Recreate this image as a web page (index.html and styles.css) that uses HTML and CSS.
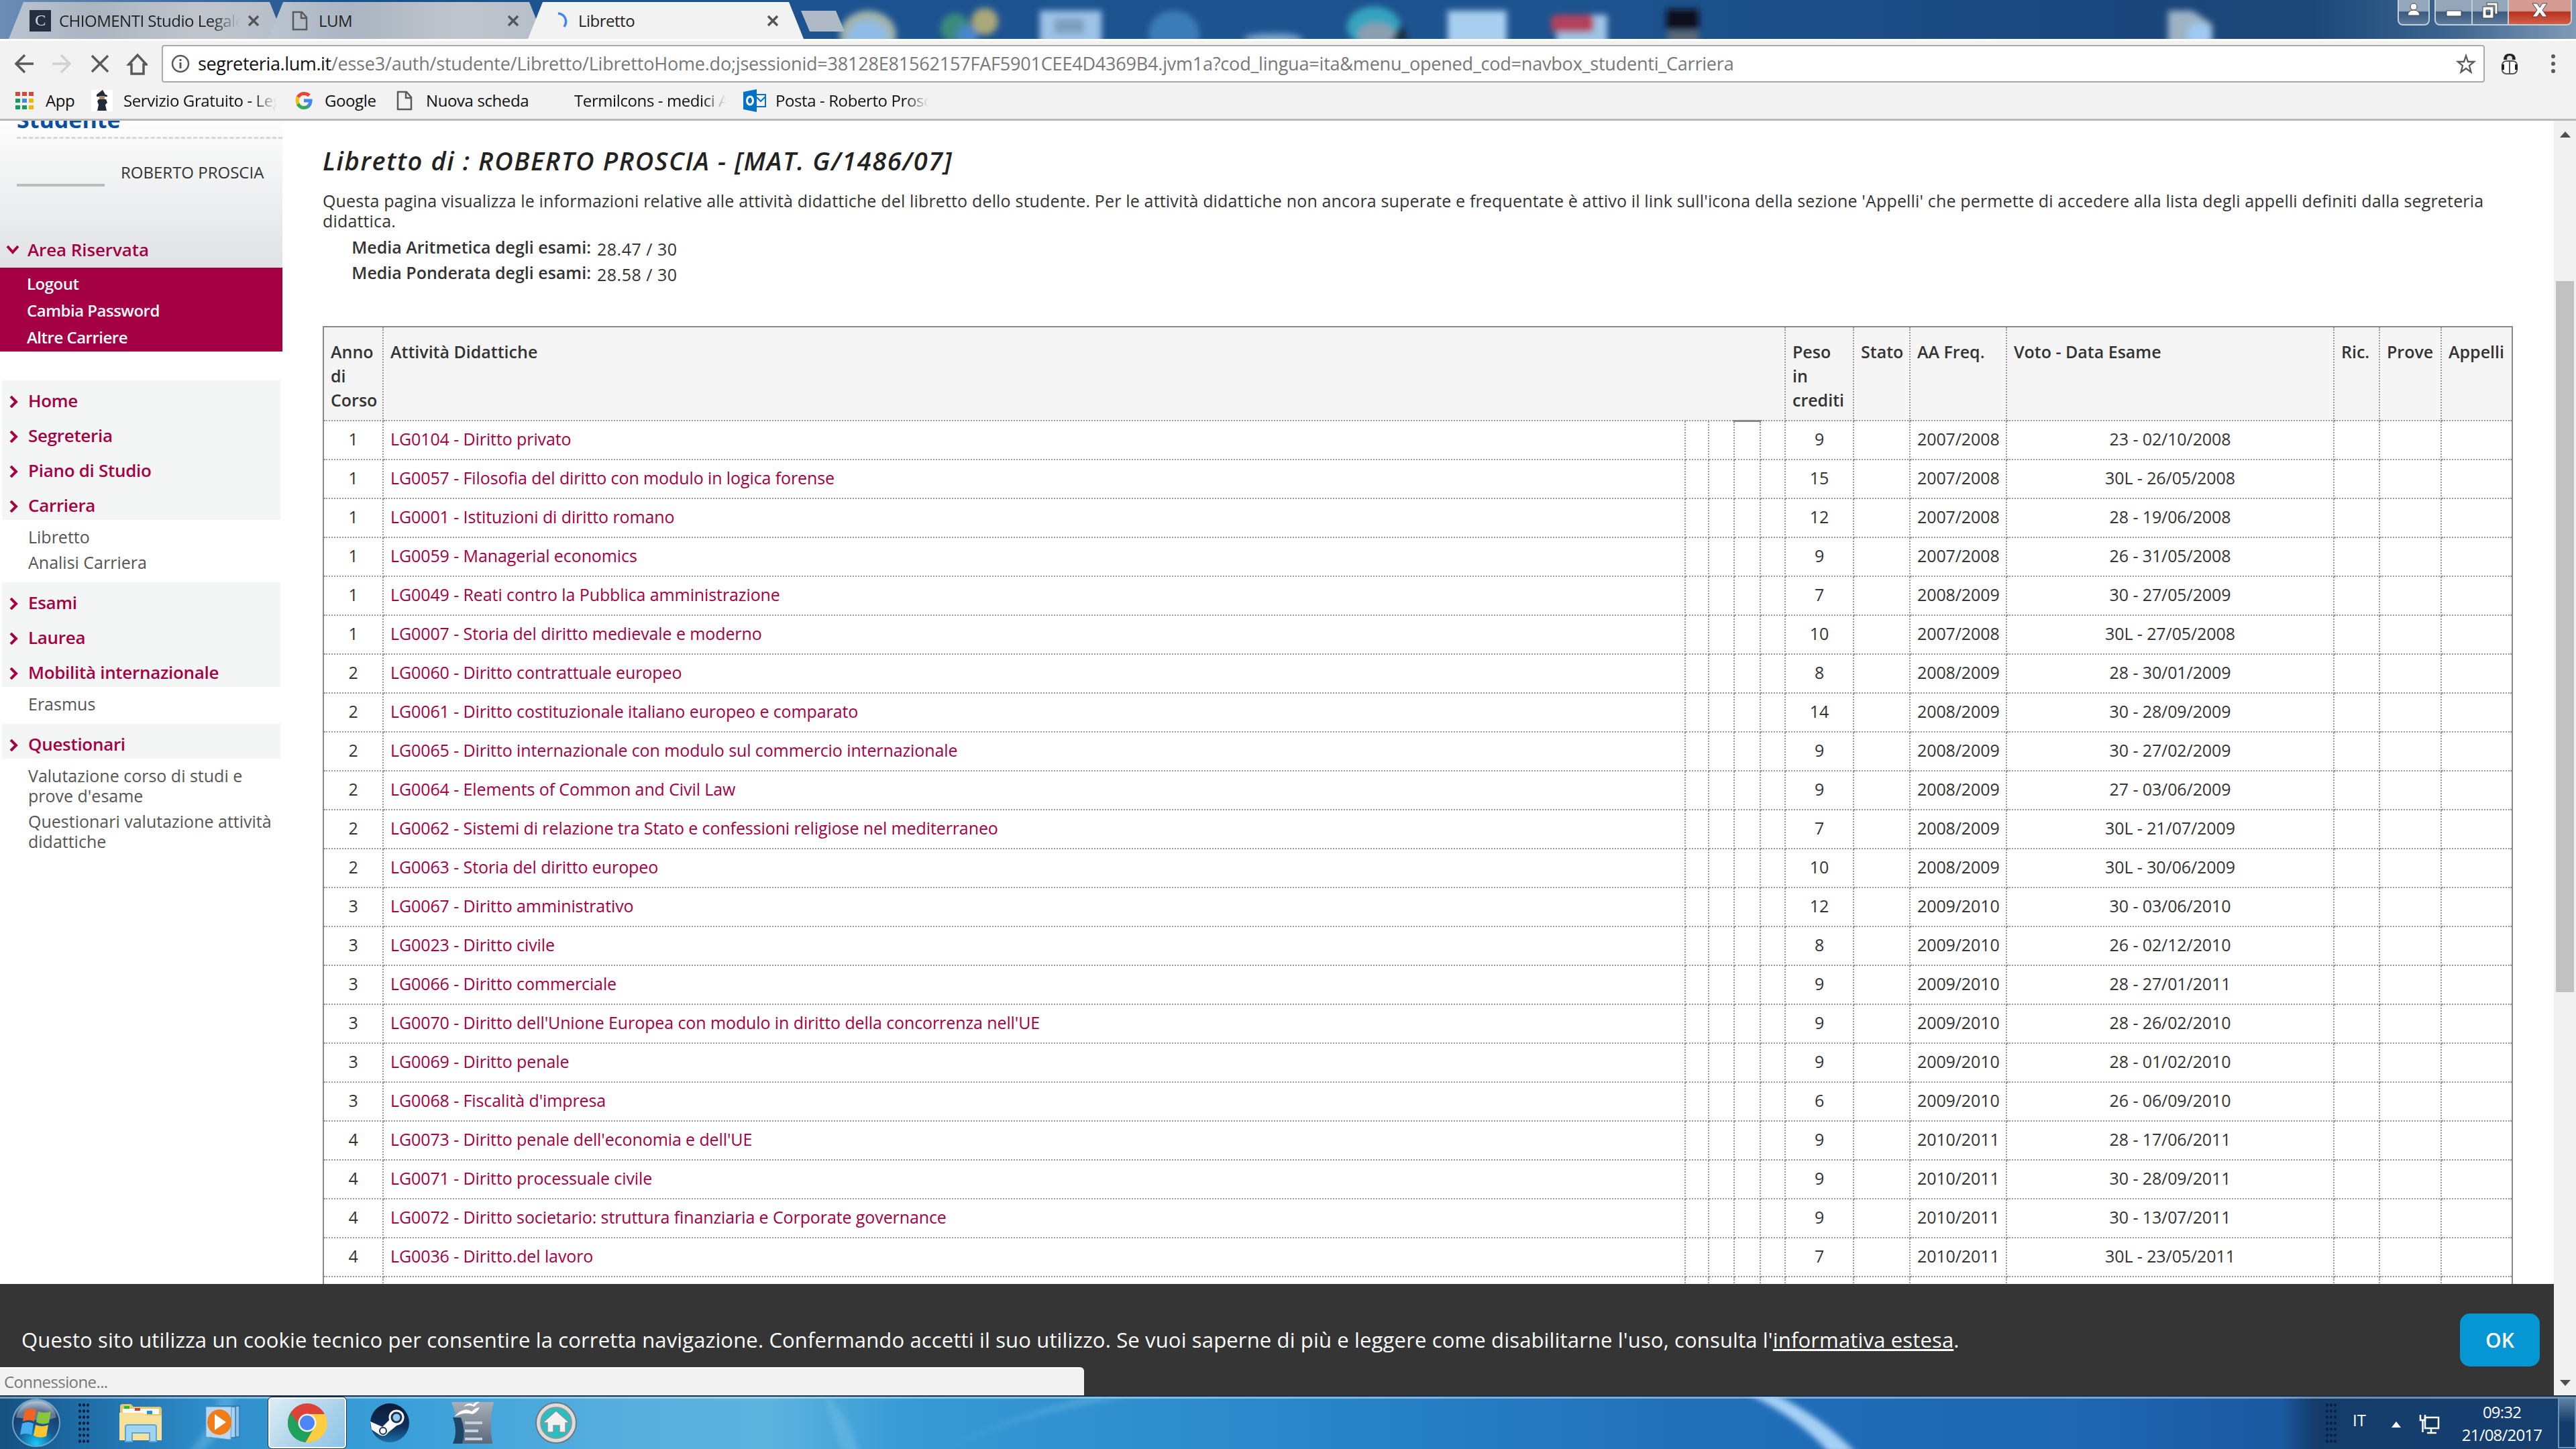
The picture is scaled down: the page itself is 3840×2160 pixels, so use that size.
FILE: index.html
```html
<!DOCTYPE html>
<html lang="it">
  <head>
    <meta charset="UTF-8" />
    <title>Libretto</title>
    <link rel="stylesheet" href="styles.css">
    <script src="script.js"></script>
  </head>
  <body>
    <!-- tabs -->
    <div id="tabstrip">
      <svg class="desktop" width="3840" height="58" viewBox="0 0 3840 58">
        <defs><filter id="blur" x="-20%" y="-20%" width="140%" height="140%"><feGaussianBlur stdDeviation="5" /></filter></defs>
        <g filter="url(#blur)">
          <ellipse cx="1294" cy="52" rx="42" ry="36" fill="#a3b5ab" /><ellipse cx="1294" cy="56" rx="30" ry="26" fill="#8fbce6" />
          <circle cx="1424" cy="42" r="22" fill="#3a8a7e" /><circle cx="1468" cy="32" r="20" fill="#a8a878" /><circle cx="1442" cy="54" r="16" fill="#4a86c8" />
          <rect x="1550" y="16" width="92" height="50" fill="#9dc3e6" /><rect x="1572" y="28" width="44" height="22" fill="#7d9fbd" />
          <ellipse cx="1750" cy="50" rx="38" ry="34" fill="#3a7cb8" />
          <ellipse cx="1898" cy="58" rx="44" ry="8" fill="#7ba6cc" />
          <ellipse cx="2048" cy="40" rx="40" ry="30" fill="#35a3bf" /><ellipse cx="2052" cy="52" rx="28" ry="18" fill="#8b9fb0" /><path d="M2075 60l14-26 10 26z" fill="#1a2636" />
          <rect x="2158" y="16" width="88" height="50" fill="#a9cff0" />
          <rect x="2320" y="22" width="76" height="50" fill="#9dc3e6" /><rect x="2312" y="22" width="64" height="26" rx="8" fill="#b0425c" />
          <rect x="2484" y="14" width="48" height="30" fill="#07101c" /><rect x="2486" y="46" width="46" height="20" fill="#5c6a76" />
          <path d="M3232 16h36l30 20v30h-66z" fill="#9db3c4" /><circle cx="3278" cy="52" r="18" fill="#9ec9f2" />
        </g>
      </svg>
      <div class="tab">
        <span class="fav fav-c">C</span><span class="tab-title fade">CHIOMENTI Studio Legale</span>
        <svg class="x" width="18" height="18" viewBox="0 0 18 18"><path d="M2 2l14 14M16 2L2 16" /></svg>
      </div>
      <div class="tab">
        <span class="fav"><svg width="24" height="30" viewBox="0 0 24 30"><path class="doc" d="M2 2h13l7 8v18H2zM14 2v9h8" /></svg></span><span class="tab-title">LUM</span>
        <svg class="x" width="18" height="18" viewBox="0 0 18 18"><path d="M2 2l14 14M16 2L2 16" /></svg>
      </div>
      <div class="tab active">
        <span class="fav"><svg width="32" height="32" viewBox="0 0 32 32"><path d="M14 5c10 1 15 11 9 20" fill="none" stroke="#4285f4" stroke-width="3.5" /></svg></span><span class="tab-title">Libretto</span>
        <svg class="x" width="18" height="18" viewBox="0 0 18 18"><path d="M2 2l14 14M16 2L2 16" /></svg>
      </div>
      <div class="newtab"></div>
      <div class="winbuttons">
        <div class="wb user"><svg width="24" height="24" viewBox="0 0 24 24"><circle cx="12" cy="7" r="5" /><path d="M3 20q1-8 9-8t9 8z" /></svg></div>
        <div class="wb min"><svg width="26" height="24" viewBox="0 0 26 24"><rect x="2" y="13" width="22" height="8" /></svg></div>
        <div class="wb max"><svg width="26" height="26" viewBox="0 0 26 26"><path fill-rule="evenodd" d="M2 8h16v17H2zm5 5v7h6v-7z" /><path d="M8 2h16v17h-4V6H8z" /></svg></div>
        <div class="wb close"><svg width="24" height="22" viewBox="0 0 24 22"><path d="M1 1h7l4 6 4-6h7l-7 10 7 10h-7l-4-6-4 6H1l7-10z" /></svg></div>
      </div>
    </div>

    <!-- address bar -->
    <div id="toolbar">
      <svg class="nav" width="220" height="40" viewBox="0 0 220 40">
        <g fill="none" stroke="#5a5a5a" stroke-width="3.5">
          <path d="M50 20H24M37 7L24 20l13 13" />
          <path stroke="#d0d0d0" d="M78 20h26M91 7l13 13-13 13" />
          <path d="M137 8l24 24M161 8l-24 24" />
          <path d="M192 21L205 7l13 14h-4v14h-18V21z" />
        </g>
      </svg>
      <div id="address">
        <svg width="30" height="30" viewBox="0 0 30 30"><circle cx="15" cy="15" r="12" fill="none" stroke="#5a5a5a" stroke-width="2.5" /><path d="M15 13v9M15 8v3" stroke="#5a5a5a" stroke-width="3" /></svg>
        <span class="url"><b>segreteria.lum.it</b>/esse3/auth/studente/Libretto/LibrettoHome.do;jsessionid=38128E81562157FAF5901CEE4D4369B4.jvm1a?cod_lingua=ita&amp;menu_opened_cod=navbox_studenti_Carriera</span>
        <svg class="star" width="30" height="30" viewBox="0 0 30 30"><path d="M15 3l3 9h9l-7 6 2.500 9.500L15 22l-7.500 5.500L10 18l-7-6h9z" fill="none" stroke="#5a5a5a" stroke-width="2.300" /></svg>
      </div>
      <svg width="28" height="34" viewBox="0 0 28 34"><path d="M5 11Q5 2 14 2t9 9z" fill="#222" /><circle cx="14" cy="9" r="4" fill="#ddd" /><rect x="3" y="13" width="22" height="19" rx="6" fill="#fff" stroke="#555" stroke-width="2" /><path d="M14 13v19" stroke="#555" stroke-width="2" /><path d="M2 18h4v8H2zM22 18h4v8h-4z" fill="#222" /></svg>
      <svg class="dots" width="8" height="30" viewBox="0 0 8 30"><g fill="#5a5a5a"><circle cx="4" cy="4" r="3" /><circle cx="4" cy="15" r="3" /><circle cx="4" cy="26" r="3" /></g></svg>
    </div>

    <div id="bookmarks">
      <div class="bm bm1">
        <svg width="30" height="28" viewBox="0 0 30 28"><path fill="#db4437" d="M1 1h7v6H1zM11 1h7v6h-7zM21 1h7v6h-7z" /><path fill="#0f9d58" d="M1 11h7v6H1zM1 21h7v6H1z" /><path fill="#4285f4" d="M11 11h7v6h-7z" /><path fill="#f4b400" d="M21 11h7v6h-7zM21 21h7v6h-7z" /><path fill="#0f9d58" d="M11 21h7v6h-7z" /></svg>
        <span>App</span>
      </div>
      <div class="bm bm2">
        <svg width="32" height="32" viewBox="0 0 32 32"><rect width="32" height="32" fill="#fff" /><path fill="#222c38" d="M8 7l9-7 4 7 3 1v2H8zM11 14h11l2 5-3 3 2 9H9l2-9-2-5z" /><path fill="#b08a68" d="M12 9h8v5h-8z" /></svg>
        <span class="fade">Servizio Gratuito - Leg</span>
      </div>
      <div class="bm bm3">
        <svg width="26" height="28" viewBox="0 0 26 28"><g fill="none" stroke-width="5"><path stroke="#ea4335" d="M4 9Q8 3 13 3.500q5 0 8 3" /><path stroke="#fbbc05" d="M4 8.500Q2 14 4.500 19.500" /><path stroke="#34a853" d="M4 19q4 6 9 5.500 5 0 7.500-3" /><path stroke="#4285f4" d="M13 14h10q0 5-3.500 8.500" /></g></svg>
        <span>Google</span>
      </div>
      <div class="bm bm4">
        <svg width="24" height="30" viewBox="0 0 24 30"><path class="doc" d="M2 2h13l7 8v18H2zM14 2v9h8" /></svg>
        <span>Nuova scheda</span>
      </div>
      <div class="bm bm5"><span class="fade">Termilcons - medici A</span></div>
      <div class="bm bm6">
        <svg width="34" height="34" viewBox="0 0 34 34"><path fill="#0072c6" d="M0 4l20-4v34L0 30z" /><path fill="none" stroke="#0072c6" stroke-width="2" d="M20 8h13v18H20M20 12l6 6 7-7" /><ellipse cx="10" cy="17" rx="4.500" ry="6" fill="none" stroke="#fff" stroke-width="3" /></svg>
        <span class="fade">Posta - Roberto Prosc</span>
      </div>
    </div>

    <!-- page -->
    <div id="view">
      <div id="page">
        <div id="side">
          <div class="userbox">
            <h2>Studente</h2>
            <div class="who"><i class="photo"></i><span>ROBERTO PROSCIA</span></div>
            <div class="area"><svg width="20" height="14" viewBox="0 0 20 14"><path d="M2 2l8 9 8-9" /></svg>Area Riservata</div>
          </div>
          <ul class="reserved">
            <li>Logout</li>
            <li>Cambia Password</li>
            <li>Altre Carriere</li>
          </ul>
          <div id="menu"></div>
        </div>

        <div id="content">
          <h1>Libretto di : ROBERTO PROSCIA - [MAT. G/1486/07]</h1>
          <p>Questa pagina visualizza le informazioni relative alle attività didattiche del libretto dello studente. Per le attività didattiche non ancora superate e frequentate è attivo il link sull'icona della sezione 'Appelli' che permette di accedere alla lista degli appelli definiti dalla segreteria<br />didattica.</p>
          <dl>
            <dt>Media Aritmetica degli esami:</dt><dd>28.47 / 30</dd>
            <dt>Media Ponderata degli esami:</dt><dd>28.58 / 30</dd>
          </dl>
          <table>
            <colgroup>
              <col class="c-anno" /><col /><col class="c-i1" /><col class="c-i2" /><col class="c-i2" /><col class="c-i3" />
              <col class="c-peso" /><col class="c-stato" /><col class="c-freq" /><col class="c-voto" /><col class="c-ric" /><col class="c-prove" /><col class="c-app" />
            </colgroup>
            <thead>
              <tr>
                <th>Anno<br />di<br />Corso</th>
                <th colspan="5">Attività Didattiche</th>
                <th>Peso<br />in<br />crediti</th>
                <th>Stato</th>
                <th>AA Freq.</th>
                <th>Voto - Data Esame</th>
                <th>Ric.</th>
                <th>Prove</th>
                <th>Appelli</th>
              </tr>
            </thead>
            <tbody id="rows"></tbody>
          </table>
        </div>
        <div id="cookie">
          <span>Questo sito utilizza un cookie tecnico per consentire la corretta navigazione. Confermando accetti il suo utilizzo. Se vuoi saperne di più e leggere come disabilitarne l'uso, consulta l'<u>informativa estesa</u>.</span>
          <button>OK</button>
        </div>
        <div id="status">Connessione...</div>
      </div>
      <div id="scroll">
        <svg width="16" height="10" viewBox="0 0 16 10"><path d="M0 10l8-9 8 9z" /></svg>
        <div class="thumb"></div>
        <svg width="16" height="10" viewBox="0 0 16 10"><path d="M0 0h16L8 9z" /></svg>
      </div>
    </div>

    <!-- taskbar -->
    <div id="taskbar">
      <svg class="swoosh" width="3840" height="80" viewBox="0 0 3840 80">
        <defs><filter id="soft" x="-20%" y="-20%" width="140%" height="140%"><feGaussianBlur stdDeviation="4" /></filter></defs>
        <path d="M2605 -4h40q70 34 122 88h-40Q2680 30 2605 -4z" fill="#a4d0f6" filter="url(#soft)" />
        <path d="M300 84Q345 40 350 0h-24Q320 40 280 84zM1395 84q120-60 290-84h-60Q1500 30 1395 84zM1230 0q40 30 50 84h-24Q1240 40 1230 0z" fill="#7cc4ea" opacity=".4" filter="url(#soft)" />
      </svg>
      <svg class="orb" width="76" height="76" viewBox="0 0 76 76">
        <defs><radialGradient id="go" cx=".5" cy=".95" r=".9"><stop offset="0" stop-color="#19c8ff" /><stop offset=".45" stop-color="#14598f" /><stop offset=".8" stop-color="#1b3b66" /><stop offset="1" stop-color="#8fa9c0" /></radialGradient></defs>
        <circle cx="38" cy="38" r="35" fill="url(#go)" stroke="#6fa3c8" stroke-width="2" />
        <path d="M8 30Q14 6 38 6t30 24Q50 36 38 34T8 30z" fill="#fff" opacity=".3" />
        <path d="M21 19q9-5 17 0l-3 17q-8-4-17 0z" fill="#ee6426" /><path d="M41 21q9 4 19 0l-3 17q-10 4-19-1z" fill="#8bc53f" />
        <path d="M17 39q9-4 17 0l-3 17q-8-4-17 0z" fill="#44aef0" /><path d="M37 41q10 4 19 0l-3 17q-10 4-19-1z" fill="#ffc52e" />
      </svg>
      <div class="grip"></div>
      <svg class="ic-folder" width="66" height="58" viewBox="0 0 66 58"><path d="M2 4q0-3 4-3h12l4 4h38q4 0 4 4v46H2z" fill="#e9c66c" /><path d="M6 8h54v8H6z" fill="#fff" /><path d="M8 4h8v4H8z" fill="#16c32a" /><path d="M24 7h8v4h-8z" fill="#d8402c" /><path d="M42 11h8v5h-8z" fill="#1f8fe0" /><path d="M1 14h36l4 4h23v37H1z" fill="#f7e09a" /><path d="M10 57V35q0-3 4-3h38q4 0 4 3v22H46V44H20v13z" fill="#9fd4f2" stroke="#5aa7d6" stroke-width="2" /></svg>
      <svg class="ic-media" width="56" height="52" viewBox="0 0 56 52"><path d="M14 1h37v46H14z" fill="#8dc0e6" stroke="#2b78b4" stroke-width="1.500" /><path d="M8 2h37v46H8z" fill="#a9d0ee" stroke="#2b78b4" stroke-width="1.500" /><path d="M1 2h38l-1 49-37-4z" fill="#b7d8f0" stroke="#5b9bcd" /><ellipse cx="21" cy="25" rx="18" ry="19" fill="#f07d1a" /><path d="M14 13v24l17-12z" fill="#fff" /></svg>
      <div class="running">
        <svg width="60" height="60" viewBox="0 0 60 60"><circle cx="30" cy="30" r="29" fill="#db4437" /><path d="M5 15.500A29 29 0 0 0 27 59L40 38 20 36z" fill="#1fa05c" /><path d="M30 17h26.500A29 29 0 0 1 27.500 59L41 36z" fill="#ffcd40" /><circle cx="30" cy="30" r="13.500" fill="#f1f1f1" /><circle cx="30" cy="30" r="11" fill="#4a86f5" /></svg>
      </div>
      <svg class="ic-steam" width="60" height="60" viewBox="0 0 60 60"><defs><linearGradient id="gs" x1="0" y1="0" x2="0" y2="1"><stop offset="0" stop-color="#0b1a33" /><stop offset=".6" stop-color="#10305c" /><stop offset="1" stop-color="#1a6fa8" /></linearGradient></defs><circle cx="30" cy="30" r="29" fill="url(#gs)" /><path d="M1 28l18 8 12-12 12 8-15 12q-5 8-13 4L3 40z" fill="#fff" /><circle cx="40" cy="22" r="10" fill="#14305a" stroke="#fff" stroke-width="3" /><circle cx="40" cy="22" r="5.500" fill="#9cc4e4" /><circle cx="20" cy="42" r="5" fill="none" stroke="#14305a" stroke-width="2" /></svg>
      <svg class="ic-office" width="64" height="64" viewBox="0 0 64 64"><defs><linearGradient id="gw" x1="0" y1="0" x2="0" y2="1"><stop offset="0" stop-color="#a9b0b8" /><stop offset="1" stop-color="#59697c" /></linearGradient></defs><path d="M0 1h63q-8 30-2 62H2Q14 34 0 1z" fill="url(#gw)" /><path d="M2 24h12q8 20 2 39H2q8-18 0-39z" fill="#1d4568" /><path d="M4 23q14-16 26-8 6-6 12-6-4 8-11 10-12-4-27 4zM18 8q8-8 14-3 4-5 10-4-4 2-8 7-8-4-16 0z" fill="#fff" /><path d="M20 30h26v4H20zM20 42h20v4H20zM20 54h26v4H20z" fill="#c5d0dc" /></svg>
      <svg class="ic-home" width="64" height="64" viewBox="0 0 64 64"><circle cx="32" cy="32" r="30" fill="#dcdcdc" stroke="#70787e" stroke-width="2" /><circle cx="32" cy="32" r="23" fill="#25c0c2" stroke="#8e979c" stroke-width="2" /><path d="M32 14l20 18h-6v14h-9V36h-9v10h-9V32h-7z" fill="#f2f2f2" stroke="#8a9298" stroke-width="1.500" /></svg>
      <div class="tray">
        <div class="grip"></div>
        <span class="lang">IT</span>
        <svg class="up" width="14" height="9" viewBox="0 0 14 9"><path d="M0 9l7-9 7 9z" fill="#fff" /></svg>
        <svg class="net" width="32" height="30" viewBox="0 0 32 30"><path d="M9 5h20v16H9zM18 21v6M12 28h14" fill="#12375f" stroke="#fff" stroke-width="2.500" /><path d="M2 1v8h7V1M5.500 9v18" fill="none" stroke="#fff" stroke-width="2.500" /></svg>
        <div class="clock">09:32<br />21/08/2017</div>
        <div class="showdesk"></div>
      </div>
    </div>
  </body>
</html>
```
FILE: styles.css
```css
* {
  box-sizing: border-box;
}
body {
  margin: 0;
  width: 3840px;
  height: 2160px;
  overflow: hidden;
  display: flex;
  flex-direction: column;
  font-family: "Open Sans", "Noto Sans", sans-serif;
  font-size: 24px;
  color: #333;
}
svg {
  display: block;
  flex: none;
}
/* tabs */
#tabstrip {
  position: relative;
  height: 58px;
  padding: 3px 6px 0 13px;
  display: flex;
  background: linear-gradient(90deg, #6b8db5 0, #1d5290 500px, #1d5490 2300px, #1a467c 3200px, #1c4878 3450px, #3c648e 3650px, #7f9ab5 3840px);
}
.desktop {
  position: absolute;
  left: 0;
  top: 0;
}
.tab {
  position: relative;
  width: 411px;
  height: 55px;
  margin-right: -24px;
  padding: 0 36px 0 31px;
  display: flex;
  align-items: center;
  background: linear-gradient(90deg, #bac4d0, #aab5c1 30%, #c0c5cd 70%, #b5bec8);
  clip-path: polygon(22px 0, 389px 0, 411px 100%, 0 100%);
  color: #222;
  letter-spacing: -0.5px;
}
.tab.active {
  background: #f2f2f2;
}
.fav {
  width: 32px;
  height: 32px;
  display: flex;
  justify-content: center;
  align-items: center;
}
.fav-c {
  background: #262f40;
  color: #ddd;
  font: 24px "Liberation Serif", serif;
}
.doc {
  fill: none;
  stroke: #5a5a5a;
  stroke-width: 2.5;
}
.tab-title {
  width: 268px;
  margin: 0 13px 0 12px;
  overflow: hidden;
  white-space: nowrap;
}
.fade {
  -webkit-mask-image: linear-gradient(90deg, #000 85%, transparent);
  mask-image: linear-gradient(90deg, #000 85%, transparent);
}
.x path {
  stroke: #555;
  stroke-width: 3.5;
}
.newtab {
  position: relative;
  width: 65px;
  height: 31px;
  margin: 13px 0 0 20px;
  background: #b0bac7;
  clip-path: polygon(0 0, 52px 0, 100% 100%, 13px 100%);
}
.winbuttons {
  position: relative;
  display: flex;
  height: 38px;
  margin: -3px 0 0 auto;
}
.wb {
  display: flex;
  justify-content: center;
  align-items: center;
  padding-bottom: 6px;
  border: 2px solid #c3cfdb;
  border-top: 0;
  background: linear-gradient(#94a7ba 45%, #38597e 50%, #5d7b9b);
}
.wb svg {
  fill: #fff;
  stroke: #444;
  stroke-width: 1;
}
.user {
  width: 48px;
  margin-right: 7px;
  border-radius: 0 0 8px 8px;
}
.min {
  width: 57px;
  border-radius: 0 0 0 8px;
}
.max {
  width: 54px;
  border-left: 0;
}
.close {
  width: 94px;
  border-left: 0;
  border-radius: 0 0 8px 0;
  background: linear-gradient(#d59a92 45%, #b8311c 50%, #d2604a);
}
/* address bar */
#toolbar {
  height: 70px;
  display: flex;
  align-items: center;
  background: #f2f2f2;
  border-top: 3px solid #fff;
}
#address {
  width: 3463px;
  height: 56px;
  margin: 0 23px 0 21px;
  padding: 0 11px;
  display: flex;
  align-items: center;
  background: #fff;
  border: 2px solid #aaa;
  border-radius: 4px;
}
.url {
  margin-left: 11px;
  font-size: 27px;
  color: #777;
  letter-spacing: -0.2px;
}
.url b {
  font-weight: 400;
  color: #111;
  letter-spacing: -0.4px;
}
.star {
  margin-left: auto;
}
.dots {
  margin-left: 47px;
}
#bookmarks {
  height: 52px;
  padding: 0 0 6px 22px;
  display: flex;
  align-items: center;
  background: #f2f2f2;
  border-bottom: 3px solid #b8b8b8;
  color: #111;
  white-space: nowrap;
  letter-spacing: -0.4px;
}
.bm {
  display: flex;
  align-items: center;
  gap: 16px;
}
.bm span {
  overflow: hidden;
}
.bm1 { width: 114px; }
.bm2 { width: 304px; }
.bm2 span { width: 228px; }
.bm3 { width: 151px; gap: 18px; }
.bm4 { width: 265px; gap: 20px; }
.bm5 { width: 252px; }
.bm5 span { width: 226px; }
.bm6 span { width: 228px; }
.bm6 { gap: 14px; }
/* page */
#view {
  height: 1900px;
  display: flex;
  background: #fff;
  font-size: 25px;
}
#page {
  position: relative;
  width: 3807px;
  height: 1900px;
  overflow: hidden;
  display: flex;
}
#side {
  width: 421px;
}
.userbox {
  height: 219px;
  padding-left: 25px;
  background: linear-gradient(#fdfdfd, #e0e2e4);
}
.userbox h2 {
  height: 27px;
  margin: 0;
  padding-bottom: 1px;
  display: flex;
  align-items: flex-end;
  overflow: hidden;
  border-bottom: 3px dashed #d5d8da;
  color: #0a50a1;
  font-size: 34px;
  line-height: 50px;
}
.who {
  height: 71px;
  display: flex;
  align-items: flex-end;
}
.photo {
  width: 131px;
  height: 4px;
  margin-right: 24px;
  background: #bbb;
}
.who span {
  line-height: 36px;
  margin-bottom: 3px;
  font-size: 24px;
}
.area {
  height: 36px;
  margin: 76px 0 0 -16px;
  display: flex;
  align-items: center;
  gap: 12px;
  color: #a50044;
  font-size: 26px;
  font-weight: 600;
  letter-spacing: -0.1px;
}
.area path,
.item path {
  fill: none;
  stroke: #a50044;
  stroke-width: 4;
}
.reserved {
  height: 125px;
  margin: 0;
  padding: 4px 0 0 40px;
  list-style: none;
  background: #a50044;
  color: #fff;
  font-size: 24px;
  font-weight: 600;
  line-height: 40px;
  letter-spacing: -0.5px;
}
#menu {
  width: 415px;
  margin: 43px 0 0 3px;
}
.group {
  padding-left: 10px;
  background: #f4f5f5;
}
.item {
  height: 52px;
  padding-top: 7px;
  display: flex;
  align-items: center;
  gap: 13px;
  color: #a50044;
  font-size: 26px;
  font-weight: 600;
  letter-spacing: -0.3px;
}
.item svg {
  margin-top: 4px;
}
.subs {
  padding: 10px 0 7px 39px;
  line-height: 30px;
  color: #555;
}
.subs div {
  margin-bottom: 8px;
}
#content {
  padding-left: 60px;
}
#content h1 {
  margin: 37px 0 0;
  font-size: 38px;
  line-height: 44px;
  font-style: italic;
  font-weight: 600;
  color: #222;
  letter-spacing: 1.6px;
  white-space: nowrap;
}
#content p {
  margin: 23px 0 0;
  line-height: 30px;
  white-space: nowrap;
  letter-spacing: 0.16px;
}
#content dl {
  margin: 0;
  padding-top: 7px;
  height: 142px;
  display: grid;
  grid-template-columns: 400px 300px;
  grid-auto-rows: 38px;
  column-gap: 9px;
}
dt {
  text-align: right;
  font-weight: 600;
  line-height: 34px;
}
dd {
  margin: 0;
  line-height: 40px;
  letter-spacing: 0.5px;
}
table {
  width: 3265px;
  table-layout: fixed;
  border-collapse: collapse;
  border: 2px solid #888;
}
.c-anno { width: 89px; }
.c-i1 { width: 35px; }
.c-i2 { width: 38.5px; }
.c-i3 { width: 37px; }
.c-peso { width: 102px; }
.c-stato { width: 84px; }
.c-freq { width: 144px; }
.c-voto { width: 488px; }
.c-ric { width: 68px; }
.c-prove { width: 92px; }
.c-app { width: 106px; }
th,
td {
  padding: 0 0 4px 10px;
  border: 2px dotted #999;
  text-align: left;
  white-space: nowrap;
}
th {
  height: 140px;
  padding-top: 18px;
  vertical-align: top;
  background: #f5f5f5;
  font-weight: 600;
  line-height: 36px;
}
td {
  line-height: 34px;
  letter-spacing: -0.1px;
}
tbody tr {
  height: 58px;
}
td.mid {
  padding: 0 0 4px;
  text-align: center;
}
td.name {
  color: #a50044;
}
tr:first-child td.mark {
  border-top: 3px solid #888;
}
/* cookie bar, fixed on the page bottom */
#cookie {
  position: absolute;
  left: 0;
  right: 0;
  bottom: 0;
  height: 166px;
  padding: 0 21px 0 32px;
  display: flex;
  align-items: center;
  justify-content: space-between;
  background: #353535;
  color: #fff;
  font-size: 31px;
  letter-spacing: 0.15px;
  white-space: nowrap;
}
#cookie button {
  width: 119px;
  height: 79px;
  border: 0;
  border-radius: 15px;
  background: #0597d4;
  color: #fff;
  font: 600 30px "Open Sans", sans-serif;
}
#status {
  position: absolute;
  left: 0;
  bottom: 0;
  width: 1616px;
  height: 42px;
  padding-left: 6px;
  background: #f2f2f2;
  border-top: 2px solid #fff;
  border-top-right-radius: 6px;
  color: #777;
  font-size: 24px;
  line-height: 40px;
  letter-spacing: -0.6px;
}
#scroll {
  width: 33px;
  padding: 15px 0 13px;
  display: flex;
  flex-direction: column;
  align-items: center;
  background: #f1f1f1;
}
#scroll svg {
  fill: #505050;
}
.thumb {
  width: 27px;
  height: 1060px;
  margin: 214px 0 auto;
  background: #c1c1c1;
}
/* taskbar */
#taskbar {
  position: relative;
  height: 80px;
  display: flex;
  align-items: center;
  border-top: 2px solid #17304c;
  background: linear-gradient(90deg, #145080 0, #1e6ca6 120px, #2f8fcb 320px, #3a9fd8 600px, #59b0de 950px, #5cb3de 1150px, #379ad4 1350px, #2f8fce 1700px, #2680c6 2100px, #2270ba 2500px, #1e66b2 3100px, #1b59a0 3400px, #143c6b 3450px, #15406f 3840px);
  box-shadow: inset 0 3px 0 rgba(255, 255, 255, 0.4);
}
#taskbar > * {
  position: relative;
  flex: none;
}
#taskbar > .swoosh {
  position: absolute;
  left: 0;
  top: 0;
}
.orb {
  margin-left: 16px;
}
.grip {
  width: 18px;
  height: 62px;
  background: radial-gradient(circle, #0a2240 2px, transparent 2.5px) 0 0 / 6px 9px;
}
#taskbar > .grip {
  margin-left: 24px;
}
.ic-folder { margin-left: 43px; }
.ic-media { margin-left: 63px; }
.running {
  width: 116px;
  height: 76px;
  margin-left: 38px;
  display: flex;
  justify-content: center;
  align-items: center;
  border: 2px solid #fff;
  border-radius: 5px;
  outline: 1px solid #234;
  background: linear-gradient(135deg, #dfedf5, #a9d2ea 60%, #8cc4e8);
}
.ic-steam { margin-left: 35px; }
.ic-office { margin-left: 62px; }
.ic-home { margin-left: 60px; }
.tray {
  height: 78px;
  margin-left: auto;
  display: flex;
  align-items: center;
  color: #fff;
}
.lang {
  margin: -10px 0 0 23px;
}
.up {
  margin: 5px 0 0 38px;
}
.net {
  margin: 4px 0 0 27px;
}
.clock {
  width: 121px;
  margin: 1px 23px 0 31px;
  text-align: center;
  line-height: 34px;
  letter-spacing: -0.8px;
}
.showdesk {
  width: 27px;
  height: 76px;
  border: 2px solid #6e93b8;
  background: linear-gradient(#5d80a4, #143c6b 50%);
}
```
FILE: script.js
```js
// anno, attività, peso, AA freq, voto - data
const exams = [
  [1, "LG0104 - Diritto privato", 9, "2007/2008", "23 - 02/10/2008"],
  [1, "LG0057 - Filosofia del diritto con modulo in logica forense", 15, "2007/2008", "30L - 26/05/2008"],
  [1, "LG0001 - Istituzioni di diritto romano", 12, "2007/2008", "28 - 19/06/2008"],
  [1, "LG0059 - Managerial economics", 9, "2007/2008", "26 - 31/05/2008"],
  [1, "LG0049 - Reati contro la Pubblica amministrazione", 7, "2008/2009", "30 - 27/05/2009"],
  [1, "LG0007 - Storia del diritto medievale e moderno", 10, "2007/2008", "30L - 27/05/2008"],
  [2, "LG0060 - Diritto contrattuale europeo", 8, "2008/2009", "28 - 30/01/2009"],
  [2, "LG0061 - Diritto costituzionale italiano europeo e comparato", 14, "2008/2009", "30 - 28/09/2009"],
  [2, "LG0065 - Diritto internazionale con modulo sul commercio internazionale", 9, "2008/2009", "30 - 27/02/2009"],
  [2, "LG0064 - Elements of Common and Civil Law", 9, "2008/2009", "27 - 03/06/2009"],
  [2, "LG0062 - Sistemi di relazione tra Stato e confessioni religiose nel mediterraneo", 7, "2008/2009", "30L - 21/07/2009"],
  [2, "LG0063 - Storia del diritto europeo", 10, "2008/2009", "30L - 30/06/2009"],
  [3, "LG0067 - Diritto amministrativo", 12, "2009/2010", "30 - 03/06/2010"],
  [3, "LG0023 - Diritto civile", 8, "2009/2010", "26 - 02/12/2010"],
  [3, "LG0066 - Diritto commerciale", 9, "2009/2010", "28 - 27/01/2011"],
  [3, "LG0070 - Diritto dell'Unione Europea con modulo in diritto della concorrenza nell'UE", 9, "2009/2010", "28 - 26/02/2010"],
  [3, "LG0069 - Diritto penale", 9, "2009/2010", "28 - 01/02/2010"],
  [3, "LG0068 - Fiscalità d'impresa", 6, "2009/2010", "26 - 06/09/2010"],
  [4, "LG0073 - Diritto penale dell'economia e dell'UE", 9, "2010/2011", "28 - 17/06/2011"],
  [4, "LG0071 - Diritto processuale civile", 9, "2010/2011", "30 - 28/09/2011"],
  [4, "LG0072 - Diritto societario: struttura finanziaria e Corporate governance", 9, "2010/2011", "30 - 13/07/2011"],
  [4, "LG0036 - Diritto.del lavoro", 7, "2010/2011", "30L - 23/05/2011"],
  ["", "", "", "", ""]
];

// menu groups: main items, then the links under the last one
const menu = [
  [["Home", "Segreteria", "Piano di Studio", "Carriera"], ["Libretto", "Analisi Carriera"]],
  [["Esami", "Laurea", "Mobilità internazionale"], ["Erasmus"]],
  [["Questionari"], ["Valutazione corso di studi e<br>prove d'esame", "Questionari valutazione attività<br>didattiche"]]
];

init = () => {
  const arrow = '<svg width="16" height="18" viewBox="0 0 16 18"><path d="M3 1l8 8-8 8" /></svg>';
  let html = "";
  for (const [items, subs] of menu) {
    html += '<div class="group">' + items.map((t) => `<div class="item">${arrow}${t}</div>`).join("") + "</div>";
    html += '<div class="subs">' + subs.map((t) => `<div>${t}</div>`).join("") + "</div>";
  }
  document.querySelector("#menu").innerHTML = html;

  document.querySelector("#rows").innerHTML = exams.map((e) => `<tr>
    <td class="mid">${e[0]}</td><td class="name">${e[1]}</td>
    <td></td><td></td><td class="mark"></td><td></td>
    <td class="mid">${e[2]}</td><td></td><td class="freq">${e[3]}</td><td class="mid">${e[4]}</td>
    <td></td><td></td><td></td></tr>`).join("");
};

window.addEventListener("load", init);
```
